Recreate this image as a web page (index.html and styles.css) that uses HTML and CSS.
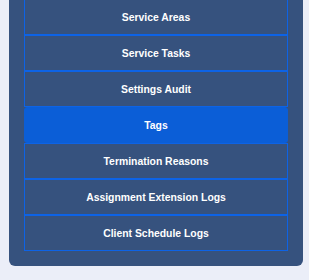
FILE: index.html
```html
<!DOCTYPE html>
<html>
  <head>
    <title>Settings Menu</title>
    <link rel="stylesheet" href="styles.css">
  </head>
  <body>
    <div class="sidebar">
      <ul class="menu-list">
        <li class="menu-item">Service Areas</li>
        <li class="menu-item">Service Tasks</li>
        <li class="menu-item">Settings Audit</li>
        <li class="menu-item active">Tags</li>
        <li class="menu-item">Termination Reasons</li>
        <li class="menu-item">Assignment Extension Logs</li>
        <li class="menu-item">Client Schedule Logs</li>
      </ul>
    </div>
  </body>
</html>
```

FILE: styles.css
```css
body {
  margin: 0;
  background-color: #ebeef8;
  font-family: "Liberation Sans", Arial, sans-serif;
}

.sidebar {
  width: 294px;
  margin: -16px 0 0 9px;
  padding: 15px 15px 15px 15px;
  box-sizing: border-box;
  background-color: #36527e;
  border-radius: 0 0 6px 6px;
}

.menu-list {
  list-style: none;
  margin: 0;
  padding: 0;
}

.menu-item {
  height: 34px;
  display: flex;
  align-items: center;
  justify-content: center;
  border: 1px solid #0d63e6;
  color: #fff;
  font-size: 10.4px;
  font-weight: bold;
}

.menu-item.active {
  background-color: #0b5ed7;
  border-color: #0b5ed7;
  border-radius: 3px;
}
```
